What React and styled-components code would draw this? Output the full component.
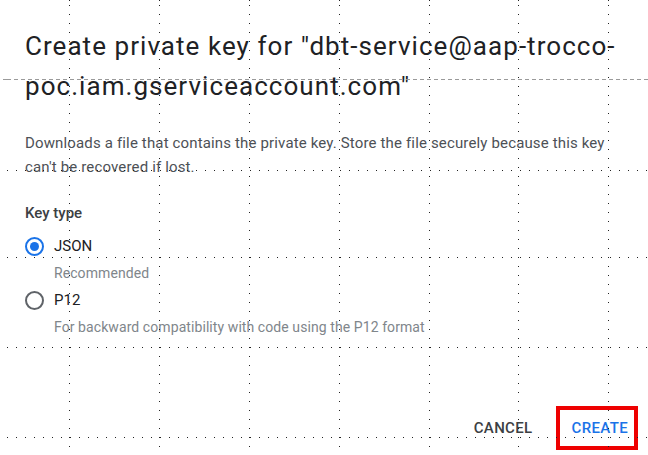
import React, { useState } from "react";
import styled, { createGlobalStyle } from "styled-components";

const GlobalStyle = createGlobalStyle`
  html, body {
    margin: 0;
    padding: 0;
    background: #fff;
  }
  body {
    font-family: Roboto, "Liberation Sans", Arial, sans-serif;
    -webkit-font-smoothing: antialiased;
  }
`;

const Page = styled.div`
  position: relative;
  width: 648px;
  height: 455px;
  overflow: hidden;
  background: #fff;
`;

const Dialog = styled.div`
  display: flex;
  flex-direction: column;
  box-sizing: border-box;
  height: 100%;
  padding: 26px 10px 5px 25px;
`;

const Title = styled.h2`
  margin: 0;
  font-size: 26px;
  font-weight: 400;
  line-height: 40px;
  color: #202124;
  letter-spacing: 1.05px;
`;

const Description = styled.p`
  margin: 25px 0 0;
  max-width: 600px;
  font-size: 15px;
  line-height: 24px;
  letter-spacing: 0.15px;
  color: #4d5156;
`;

const FieldLabel = styled.div`
  margin-top: 22px;
  font-size: 15px;
  font-weight: 500;
  line-height: 24px;
  color: #3c4043;
`;

const Options = styled.div`
  display: flex;
  flex-direction: column;
  margin-top: 7px;
`;

const Option = styled.label`
  display: flex;
  align-items: center;
  gap: 10px;
  height: 28px;
  cursor: pointer;
  font-size: 15px;
  color: #202124;
`;

const RadioCircle = styled.span`
  box-sizing: border-box;
  display: flex;
  align-items: center;
  justify-content: center;
  width: 19px;
  height: 19px;
  border-radius: 50%;
  border: 2px solid ${({ $checked }) => ($checked ? "#1a73e8" : "#5f6368")};

  &::after {
    content: "";
    width: 9px;
    height: 9px;
    border-radius: 50%;
    background: #1a73e8;
    display: ${({ $checked }) => ($checked ? "block" : "none")};
  }
`;

const Hint = styled.div`
  padding-left: 29px;
  font-size: 14px;
  line-height: 26px;
  letter-spacing: 0.08px;
  color: #80868b;
`;

const Actions = styled.div`
  display: flex;
  justify-content: flex-end;
  align-items: center;
  gap: 17px;
  margin-top: auto;
`;

const TextButton = styled.button`
  height: 36px;
  padding: 0 6px;
  border: none;
  background: transparent;
  font-family: inherit;
  font-size: 15px;
  font-weight: 500;
  letter-spacing: 0.35px;
  text-transform: uppercase;
  color: ${({ $primary }) => ($primary ? "#1a73e8" : "#3c4043")};
  cursor: pointer;
`;

const Highlight = styled.span`
  display: flex;
  border: 4px solid #ee0000;
  padding-left: 6px;
`;

const Grid = styled.div`
  position: absolute;
  inset: 0;
  pointer-events: none;
`;

const VLine = styled.div`
  position: absolute;
  top: 0;
  bottom: 0;
  width: 1px;
  background: repeating-linear-gradient(to bottom, #222 0 1px, transparent 1px 9px);
  background-position: 0 5px;
`;

const HLine = styled.div`
  position: absolute;
  left: 0;
  right: 0;
  height: 1px;
  background: ${({ $dashed }) =>
    $dashed
      ? "repeating-linear-gradient(to right, #9a9a9a 0 4px, transparent 4px 7px)"
      : "repeating-linear-gradient(to right, #222 0 1px, transparent 1px 9px)"};
  background-position: 7px 0;
`;

const columns = [69, 159, 249, 339, 429, 518, 608];
const rows = [170, 257, 347, 437];

const App = () => {
  const [keyType, setKeyType] = useState("json");

  return (
    <Page>
      <GlobalStyle />
      <Dialog>
        <Title>
          Create private key for "dbt-service@aap-trocco-poc.iam.gserviceaccount.com"
        </Title>
        <Description>
          Downloads a file that contains the private key. Store the file securely because this key
          can't be recovered if lost.
        </Description>
        <FieldLabel>Key type</FieldLabel>
        <Options>
          <Option onClick={() => setKeyType("json")}>
            <RadioCircle $checked={keyType === "json"} />
            JSON
          </Option>
          <Hint>Recommended</Hint>
          <Option onClick={() => setKeyType("p12")}>
            <RadioCircle $checked={keyType === "p12"} />
            P12
          </Option>
          <Hint>For backward compatibility with code using the P12 format</Hint>
        </Options>
        <Actions>
          <TextButton>Cancel</TextButton>
          <Highlight>
            <TextButton $primary>Create</TextButton>
          </Highlight>
        </Actions>
      </Dialog>
      <Grid>
        {columns.map((x) => (
          <VLine key={x} style={{ left: x }} />
        ))}
        <HLine $dashed style={{ top: 79 }} />
        {rows.map((y) => (
          <HLine key={y} style={{ top: y }} />
        ))}
      </Grid>
    </Page>
  );
};

export default App;
